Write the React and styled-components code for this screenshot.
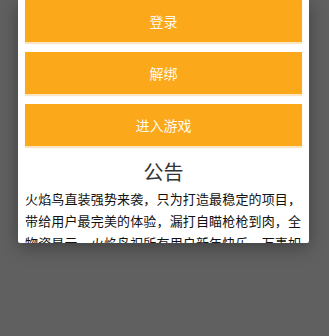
import React from 'react';
import styled, { createGlobalStyle } from 'styled-components';

const GlobalStyle = createGlobalStyle`
  html, body {
    margin: 0;
    padding: 0;
    background: #606060;
    height: 100%;
  }
  body {
    font-family: "Noto Sans CJK SC", "Noto Sans", sans-serif;
  }
`;

const Screen = styled.div`
  width: 329px;
  height: 336px;
  overflow: hidden;
`;

const Dialog = styled.div`
  margin: 0 20px 0 18px;
  height: 243px;
  padding: 0 7px;
  background: #ffffff;
  border-radius: 0 0 2px 2px;
  box-shadow: 0 4px 18px rgba(0, 0, 0, 0.35);
  overflow: hidden;
  box-sizing: border-box;
`;

const Buttons = styled.div`
  display: flex;
  flex-direction: column;
  gap: 10px;
`;

const ActionButton = styled.button`
  height: 42px;
  width: 100%;
  border: none;
  background: #fca81b;
  color: #fffaf0;
  font-family: "Noto Sans CJK SC", sans-serif;
  font-size: 14px;
  box-shadow: 0 2px 1px rgba(240, 170, 60, 0.3);
  cursor: pointer;
  padding: 0;
`;

const Title = styled.h2`
  margin: 12px 0 0;
  font-size: 20px;
  line-height: 28px;
  font-weight: 400;
  color: #333333;
  text-align: center;
`;

const Notice = styled.p`
  margin: 2px 0 0;
  font-size: 13px;
  line-height: 22px;
  letter-spacing: 0.15px;
  color: #111111;
`;

const App = () => {
  const actions = ['登录', '解绑', '进入游戏'];

  return (
    <Screen>
      <GlobalStyle />
      <Dialog>
        <Buttons>
          {actions.map((label) => (
            <ActionButton key={label}>{label}</ActionButton>
          ))}
        </Buttons>
        <Title>公告</Title>
        <Notice>
          火焰鸟直装强势来袭，只为打造最稳定的项目，带给用户最完美的体验，漏打自瞄枪枪到肉，全物资显示，火焰鸟祝所有用户新年快乐，万事如意！
        </Notice>
      </Dialog>
    </Screen>
  );
};

export default App;
